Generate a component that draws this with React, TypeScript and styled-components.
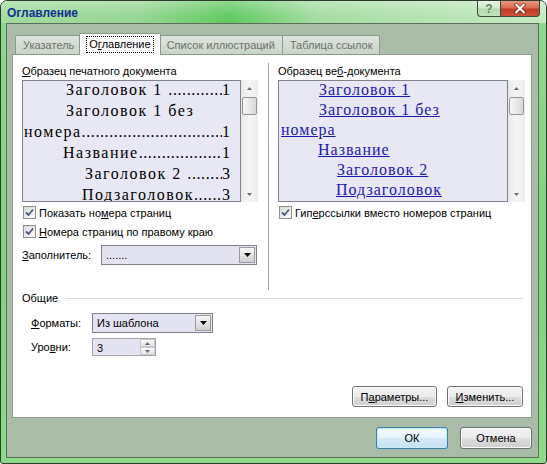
import React from 'react'
import styled, { createGlobalStyle } from 'styled-components'

const GlobalStyle = createGlobalStyle`
	html, body {
		margin: 0;
		padding: 0;
		background: #ffffff;
	}
	body {
		font-family: "Liberation Sans", Arial, sans-serif;
		font-size: 11px;
		color: #000;
	}
`

const Window = styled.div`
	box-sizing: border-box;
	width: 547px;
	height: 464px;
	border: 1px solid #2d3b2d;
	border-radius: 7px 7px 3px 3px;
	background: linear-gradient(180deg, #8fd98c 0%, #7fd47e 60%, #8edb8a 100%);
	display: flex;
	flex-direction: column;
	overflow: hidden;
`
const TitleBar = styled.div`
	height: 22px;
	flex: none;
	display: flex;
	padding: 0 6px 0 6px;
	background: linear-gradient(180deg, rgba(255, 255, 255, 0.28), rgba(255, 255, 255, 0) 70%),
		linear-gradient(90deg, #a3dba0 0%, #98d795 25%, #62ca62 42%, #a6dda3 58%, #c6eac2 100%);
`
const Title = styled.div`
	font-weight: bold;
	font-size: 12px;
	line-height: 24px;
	color: #12308f;
`
const Captions = styled.div`
	margin-left: auto;
	display: flex;
	align-self: flex-start;
`
const CaptionButton = styled.div<{ $close?: boolean }>`
	box-sizing: border-box;
	width: ${(p) => (p.$close ? 39 : 24)}px;
	height: 16px;
	border: 1px solid #3b4a3b;
	border-top: none;
	border-left-width: ${(p) => (p.$close ? 0 : 1)}px;
	border-radius: ${(p) => (p.$close ? '0 0 4px 0' : '0 0 0 4px')};
	display: flex;
	align-items: center;
	justify-content: center;
	font-weight: bold;
	font-size: 12px;
	color: #6d7d6c;
	background: ${(p) =>
		p.$close
			? 'linear-gradient(180deg, #e99a82 0%, #d96a50 45%, #c23c24 55%, #cf5238 100%)'
			: 'linear-gradient(180deg, #e6f4e4 0%, #cfe8cb 45%, #b2d9ad 55%, #c3e2bf 100%)'};
`

const Client = styled.div`
	flex: 1;
	margin: 0 7px 5px 5px;
	border: 1px solid #5e6e5d;
	background: #a9bca7;
	padding: 9px 6px 0 5px;
	display: flex;
	flex-direction: column;
`
const TabStrip = styled.div`
	height: 21px;
	display: flex;
	align-items: flex-end;
	padding-left: 3px;
	position: relative;
	z-index: 1;
`
const Tab = styled.div<{ $active?: boolean }>`
	box-sizing: border-box;
	height: ${(p) => (p.$active ? 22 : 19)}px;
	margin: ${(p) => (p.$active ? '0 -2px -1px -2px' : '0 -1px 0 0')};
	padding: ${(p) => (p.$active ? '0 6px' : '0 7px')};
	border: 1px solid #8c998b;
	border-bottom: none;
	border-radius: 2px 2px 0 0;
	background: ${(p) => (p.$active ? '#ffffff' : 'linear-gradient(180deg, #dde5dc 0%, #c9d4c8 100%)')};
	color: ${(p) => (p.$active ? '#000' : '#707070')};
	display: flex;
	align-items: center;
	position: relative;
	z-index: ${(p) => (p.$active ? 2 : 1)};
`
const FocusText = styled.span`
	border: 1px dotted #000;
	padding: 1px 2px;
	line-height: 13px;
`

const Panel = styled.div`
	box-sizing: border-box;
	height: 364px;
	border: 1px solid #8c998b;
	background: #ffffff;
	padding: 8px 6px 10px 9px;
	display: flex;
	flex-direction: column;
`
const Columns = styled.div`
	height: 227px;
	display: flex;
`
const Column = styled.div<{ $width?: number }>`
	${(p) => (p.$width ? `width: ${p.$width}px;` : 'flex: 1;')}
	padding-top: 2px;
	display: flex;
	flex-direction: column;
`
const Separator = styled.div`
	width: 1px;
	background: #a3a3a3;
	margin: 0 9px 0 10px;
`
const Caption = styled.div`
	line-height: 13px;
	white-space: nowrap;
`
const Preview = styled.div`
	height: 122px;
	margin-top: 2px;
	display: flex;
`
const PreviewBody = styled.div<{ $pad: number }>`
	flex: 1;
	border: 1px solid #7e828b;
	background: #e8e8f5;
	overflow: hidden;
	padding-right: ${(p) => p.$pad}px;
	font-family: "Liberation Serif", "Times New Roman", serif;
	font-size: 16px;
`
const TocLine = styled.div<{ $indent: number }>`
	display: flex;
	align-items: baseline;
	height: 21px;
	line-height: 21px;
	padding-left: ${(p) => p.$indent}px;
	white-space: nowrap;
	letter-spacing: 1.5px;
	&:first-child {
		margin-top: -2px;
	}
`
const EntryText = styled.span`
	white-space: pre;
`
const Leader = styled.span`
	flex: 1;
	overflow: hidden;
	letter-spacing: 0.6px;
	&::before {
		content: '..............................................................';
	}
`
const PageNo = styled.span`
	letter-spacing: 0;
`
const WebLine = styled.div<{ $indent: number }>`
	height: 20px;
	line-height: 20px;
	padding-left: ${(p) => p.$indent}px;
	white-space: nowrap;
	&:first-child {
		margin-top: -1px;
	}
`
const WebLink = styled.span`
	color: #1a1ab0;
	text-decoration: underline;
	letter-spacing: 1px;
`

const Scrollbar = styled.div`
	width: 17px;
	flex: none;
	display: flex;
	flex-direction: column;
	background: linear-gradient(90deg, #e9e9e9 0%, #f6f6f6 50%, #ececec 100%);
`
const ScrollArrow = styled.div`
	height: 16px;
	display: flex;
	align-items: center;
	justify-content: center;
`
const Thumb = styled.div`
	height: 16px;
	margin: 1px 1px 0;
	border: 1px solid #959595;
	border-radius: 2px;
	background: linear-gradient(90deg, #f7f7f7 0%, #e9e9e9 50%, #d8d8d8 100%);
`
const Track = styled.div`
	flex: 1;
`

const CheckRow = styled.div<{ $gap: number }>`
	display: flex;
	align-items: center;
	height: 13px;
	gap: 3px;
	margin: ${(p) => p.$gap}px 0 0 1px;
	white-space: nowrap;
`
const CheckBox = styled.div`
	box-sizing: border-box;
	width: 13px;
	height: 13px;
	border: 1px solid #8e8f8f;
	background: linear-gradient(135deg, #d8d8d8 0%, #f4f4f4 70%, #ffffff 100%);
	display: flex;
	align-items: center;
	justify-content: center;
`

const FieldRow = styled.div<{ $gap: number; $inset?: number }>`
	display: flex;
	align-items: center;
	margin-top: ${(p) => p.$gap}px;
	padding-left: ${(p) => p.$inset ?? 0}px;
`
const FieldLabel = styled.div<{ $width: number }>`
	width: ${(p) => p.$width}px;
	white-space: nowrap;
`
const Select = styled.div<{ $width: number }>`
	box-sizing: border-box;
	width: ${(p) => p.$width}px;
	height: 20px;
	border: 1px solid #7f8288;
	background: #e3e3f1;
	display: flex;
`
const SelectText = styled.div`
	flex: 1;
	padding-left: 4px;
	line-height: 18px;
`
const SelectButton = styled.div`
	box-sizing: border-box;
	width: 16px;
	margin: 1px;
	border: 1px solid #9a9a9a;
	background: linear-gradient(180deg, #f7f7f7 0%, #e4e4e4 50%, #cfcfcf 100%);
	display: flex;
	align-items: center;
	justify-content: center;
`
const Spin = styled.div`
	box-sizing: border-box;
	width: 64px;
	height: 18px;
	border: 1px solid #a3a6ad;
	background: #e3e3f1;
	display: flex;
`
const SpinButtons = styled.div`
	width: 15px;
	display: flex;
	flex-direction: column;
	background: #f2f2f2;
`
const SpinHalf = styled.div`
	flex: 1;
	display: flex;
	align-items: center;
	justify-content: center;
	border: 1px solid #c9c9c9;
	background: linear-gradient(180deg, #fafafa, #e3e3e3);
`

const General = styled.div`
	margin-top: 2px;
	padding-right: 2px;
`
const GroupHeader = styled.div`
	display: flex;
	align-items: center;
	gap: 7px;
	line-height: 13px;
`
const GroupLine = styled.div`
	flex: 1;
	height: 1px;
	background: #dcdcdc;
`
const Spacer = styled.div`
	flex: 1;
`
const ButtonRow = styled.div<{ $gap: number; $top?: number; $right?: number }>`
	display: flex;
	justify-content: flex-end;
	gap: ${(p) => p.$gap}px;
	padding-top: ${(p) => p.$top ?? 0}px;
	padding-right: ${(p) => p.$right ?? 0}px;
`
const Button = styled.div<{ $width: number; $height: number; $default?: boolean }>`
	box-sizing: border-box;
	width: ${(p) => p.$width}px;
	height: ${(p) => p.$height}px;
	border: 1px solid ${(p) => (p.$default ? '#3c7fb1' : '#707070')};
	border-radius: 3px;
	box-shadow: inset 0 0 0 1px ${(p) => (p.$default ? '#c6ecfc' : '#fbfbfb')};
	background: ${(p) =>
		p.$default
			? 'linear-gradient(180deg, #f3fafe 0%, #e6f3fb 50%, #d3eaf8 51%, #c6e2f4 100%)'
			: 'linear-gradient(180deg, #f2f2f2 0%, #ebebeb 50%, #dddddd 51%, #cfcfcf 100%)'};
	display: flex;
	align-items: center;
	justify-content: center;
	white-space: nowrap;
`

const Arrow = ({ up, color = '#000', w = 7, h = 4 }: { up?: boolean; color?: string; w?: number; h?: number }) => (
	<svg width={w} height={h} viewBox={`0 0 ${w} ${h}`}>
		<polygon points={up ? `0,${h} ${w / 2},0 ${w},${h}` : `0,0 ${w},0 ${w / 2},${h}`} fill={color} />
	</svg>
)

const Check = () => (
	<svg width="9" height="9" viewBox="0 0 9 9">
		<path d="M1 4.5 L3.5 7 L8 1.5" fill="none" stroke="#4b5c80" strokeWidth="1.8" />
	</svg>
)

const CloseGlyph = () => (
	<svg width="14" height="11" viewBox="0 0 14 11">
		<path d="M3 1.5 L11 9.5 M11 1.5 L3 9.5" stroke="#6a2418" strokeWidth="3.4" strokeLinecap="round" />
		<path d="M3 1.5 L11 9.5 M11 1.5 L3 9.5" stroke="#ffffff" strokeWidth="2" strokeLinecap="round" />
	</svg>
)

const ScrollBar = () => (
	<Scrollbar>
		<ScrollArrow>
			<Arrow up color="#6b6b6b" w={5} h={3} />
		</ScrollArrow>
		<Thumb />
		<Track />
		<ScrollArrow>
			<Arrow color="#6b6b6b" w={5} h={3} />
		</ScrollArrow>
	</Scrollbar>
)

const printLines = [
	{ indent: 43, text: 'Заголовок 1 ', page: '1' },
	{ indent: 43, text: 'Заголовок 1 без', page: '' },
	{ indent: 1, text: 'номера', page: '1' },
	{ indent: 40, text: 'Название', page: '1' },
	{ indent: 62, text: 'Заголовок 2 ', page: '3' },
	{ indent: 59, text: 'Подзаголовок', page: '3' },
]

const webLines = [
	{ indent: 40, text: 'Заголовок 1' },
	{ indent: 40, text: 'Заголовок 1 без' },
	{ indent: 2, text: 'номера' },
	{ indent: 39, text: 'Название' },
	{ indent: 58, text: 'Заголовок 2' },
	{ indent: 57, text: 'Подзаголовок' },
]

export default function App() {
	return (
		<>
			<GlobalStyle />
			<Window>
				<TitleBar>
					<Title>Оглавление</Title>
					<Captions>
						<CaptionButton>?</CaptionButton>
						<CaptionButton $close>
							<CloseGlyph />
						</CaptionButton>
					</Captions>
				</TitleBar>
				<Client>
					<TabStrip>
						<Tab>Указатель</Tab>
						<Tab $active>
							<FocusText>
								О<u>г</u>лавление
							</FocusText>
						</Tab>
						<Tab>Список иллюстраций</Tab>
						<Tab>Таблица ссылок</Tab>
					</TabStrip>
					<Panel>
						<Columns>
							<Column $width={236}>
								<Caption>
									<u>О</u>бразец печатного документа
								</Caption>
								<Preview>
									<PreviewBody $pad={10}>
										{printLines.map((l, i) => (
											<TocLine key={i} $indent={l.indent}>
												<EntryText>{l.text}</EntryText>
												{l.page && <Leader />}
												{l.page && <PageNo>{l.page}</PageNo>}
											</TocLine>
										))}
									</PreviewBody>
									<ScrollBar />
								</Preview>
								<CheckRow $gap={4}>
									<CheckBox>
										<Check />
									</CheckBox>
									<span>
										Показать но<u>м</u>ера страниц
									</span>
								</CheckRow>
								<CheckRow $gap={6}>
									<CheckBox>
										<Check />
									</CheckBox>
									<span>
										<u>Н</u>омера страниц по правому краю
									</span>
								</CheckRow>
								<FieldRow $gap={7}>
									<FieldLabel $width={79}>
										<u>З</u>аполнитель:
									</FieldLabel>
									<Select $width={156}>
										<SelectText>.......</SelectText>
										<SelectButton>
											<Arrow />
										</SelectButton>
									</Select>
								</FieldRow>
							</Column>
							<Separator />
							<Column>
								<Caption>
									Образец ве<u>б</u>-документа
								</Caption>
								<Preview>
									<PreviewBody $pad={0}>
										{webLines.map((l, i) => (
											<WebLine key={i} $indent={l.indent}>
												<WebLink>{l.text}</WebLink>
											</WebLine>
										))}
									</PreviewBody>
									<ScrollBar />
								</Preview>
								<CheckRow $gap={4}>
									<CheckBox>
										<Check />
									</CheckBox>
									<span>
										Гип<u>е</u>рссылки вместо номеров страниц
									</span>
								</CheckRow>
							</Column>
						</Columns>
						<General>
							<GroupHeader>
								<span>Общие</span>
								<GroupLine />
							</GroupHeader>
							<FieldRow $gap={8} $inset={9}>
								<FieldLabel $width={61}>
									<u>Ф</u>орматы:
								</FieldLabel>
								<Select $width={121}>
									<SelectText>Из шаблона</SelectText>
									<SelectButton>
										<Arrow />
									</SelectButton>
								</Select>
							</FieldRow>
							<FieldRow $gap={5} $inset={9}>
								<FieldLabel $width={61}>
									Уро<u>в</u>ни:
								</FieldLabel>
								<Spin>
									<SelectText>3</SelectText>
									<SpinButtons>
										<SpinHalf>
											<Arrow up color="#5b6b7b" w={5} h={3} />
										</SpinHalf>
										<SpinHalf>
											<Arrow color="#5b6b7b" w={5} h={3} />
										</SpinHalf>
									</SpinButtons>
								</Spin>
							</FieldRow>
						</General>
						<Spacer />
						<ButtonRow $gap={10} $right={2}>
							<Button $width={85} $height={21}>
								П<u>а</u>раметры...
							</Button>
							<Button $width={76} $height={21}>
								<u>И</u>зменить...
							</Button>
						</ButtonRow>
					</Panel>
					<ButtonRow $gap={12} $top={9}>
						<Button $width={72} $height={22} $default>
							ОК
						</Button>
						<Button $width={72} $height={22}>
							Отмена
						</Button>
					</ButtonRow>
				</Client>
			</Window>
		</>
	)
}
